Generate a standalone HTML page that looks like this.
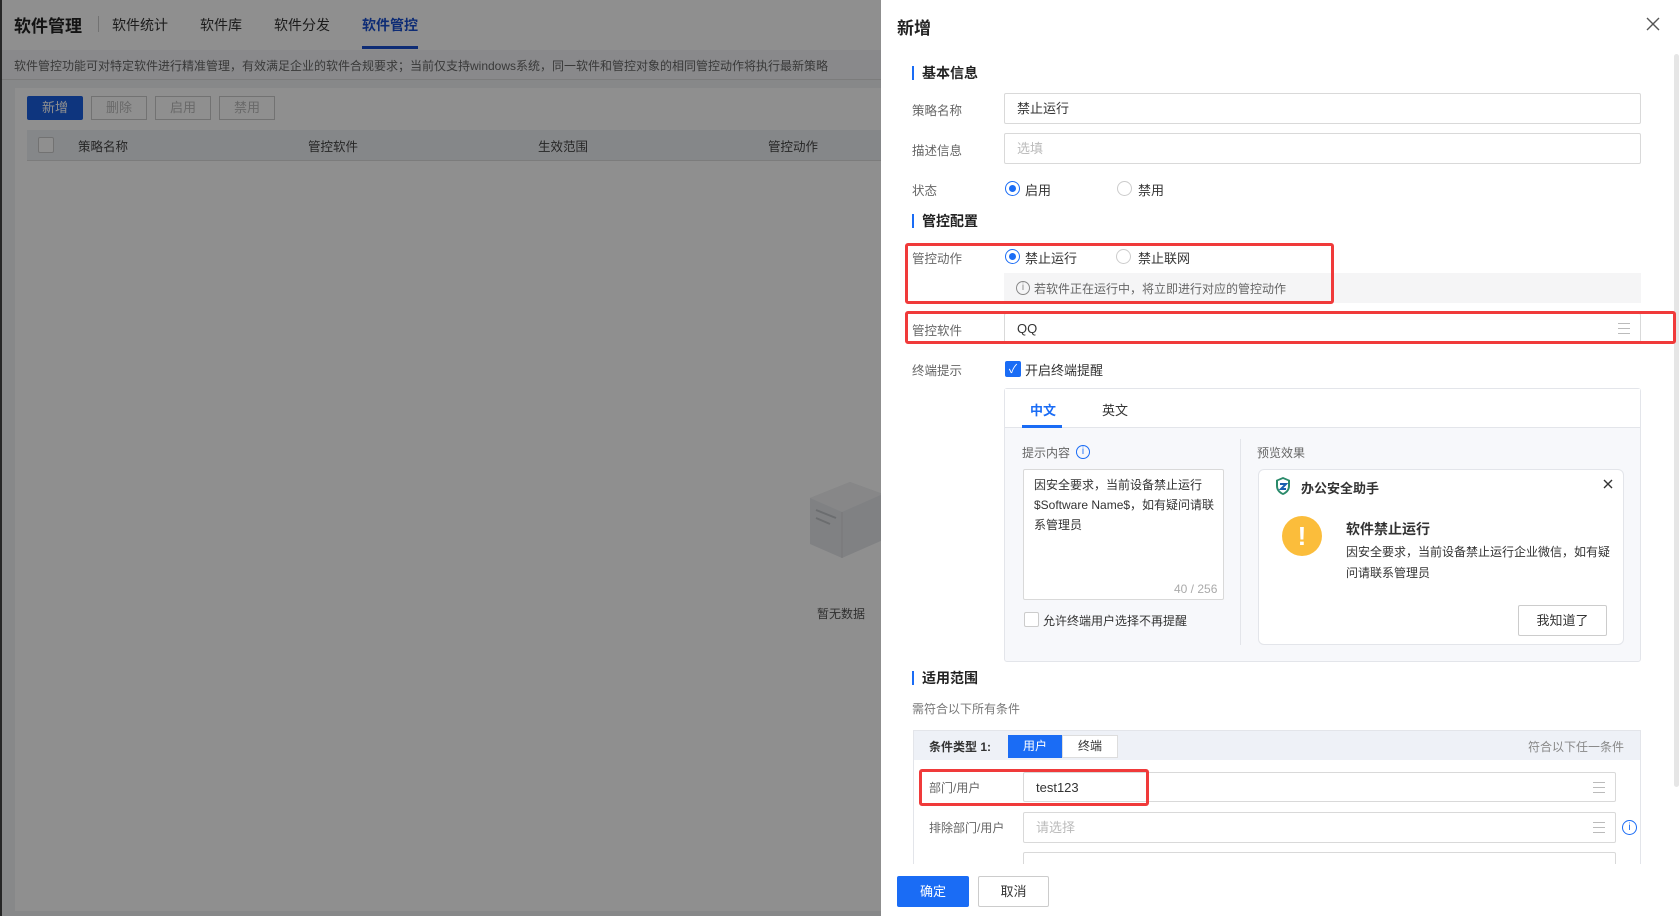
<!DOCTYPE html>
<html><head><meta charset="utf-8"><style>
*{box-sizing:border-box;margin:0;padding:0}
body{width:1679px;height:916px;overflow:hidden;position:relative;font-family:"Liberation Sans","Noto Sans CJK SC",sans-serif;font-size:13px;color:#333;background:#f0f2f5}
.abs{position:absolute}
.left{position:absolute;left:0;top:0;width:881px;height:916px;background:#f0f2f5;border-left:2px solid #444}
.ov{position:absolute;left:0;top:0;width:881px;height:916px;background:rgba(0,0,0,.44)}
.drawer{position:absolute;left:881px;top:0;width:798px;height:916px;background:#fff}
.lbl{position:absolute;left:31px;color:#666;font-size:12.5px}
.inp{position:absolute;left:123px;width:637px;height:31px;border:1px solid #d9d9d9;border-radius:2px;padding-left:12px;line-height:29px;font-size:13px;color:#333}
.sec{position:absolute;left:31px;font-size:14px;font-weight:bold;color:#222;padding-left:8px;border-left:2px solid #1a6cf5;line-height:14px}
.radio{position:absolute;width:15px;height:15px;border:1px solid #ccc;border-radius:50%;background:#fff}
.radio.on{border-color:#1a6cf5}
.radio.on:after{content:"";position:absolute;left:3px;top:3px;width:7px;height:7px;border-radius:50%;background:#1a6cf5}
.red{position:absolute;border:3px solid #f03a3a;border-radius:3px}
.menu{position:absolute;right:10px;top:9px;width:12px;height:11px;border-top:1px solid #bbb;border-bottom:1px solid #bbb}
.menu:after{content:"";position:absolute;left:0;right:0;top:4px;border-top:1px solid #bbb}
</style></head><body>
<div class="left">
 <div class="abs" style="left:0;top:0;width:881px;height:50px;background:#fff"></div>
 <div class="abs" style="left:12px;top:12px;font-size:17px;font-weight:bold;color:#222">软件管理</div>
 <div class="abs" style="left:96px;top:16px;height:16px;border-left:1px solid #ccc"></div>
 <div class="abs" style="left:110px;top:15px;font-size:14px">软件统计</div>
 <div class="abs" style="left:198px;top:15px;font-size:14px">软件库</div>
 <div class="abs" style="left:272px;top:15px;font-size:14px">软件分发</div>
 <div class="abs" style="left:360px;top:15px;font-size:14px;color:#1a4fd0;font-weight:bold">软件管控</div>
 <div class="abs" style="left:360px;top:46px;width:56px;height:3px;background:#1a4fd0"></div>
 <div class="abs" style="left:0;top:50px;width:881px;height:30px;background:#f4f5f8;border-bottom:1px solid #ddd"></div>
 <div class="abs" style="left:12px;top:57px;font-size:12px;color:#666">软件管控功能可对特定软件进行精准管理，有效满足企业的软件合规要求；当前仅支持windows系统，同一软件和管控对象的相同管控动作将执行最新策略</div>
 <div class="abs" style="left:13px;top:88px;width:868px;height:823px;background:#fff"></div>
 <div class="abs" style="left:25px;top:96px;width:56px;height:24px;background:#1a5fe0;color:#fff;text-align:center;line-height:24px;border-radius:2px">新增</div>
 <div class="abs" style="left:89px;top:96px;width:56px;height:24px;border:1px solid #ccc;color:#bbb;text-align:center;line-height:22px">删除</div>
 <div class="abs" style="left:153px;top:96px;width:56px;height:24px;border:1px solid #ccc;color:#bbb;text-align:center;line-height:22px">启用</div>
 <div class="abs" style="left:217px;top:96px;width:56px;height:24px;border:1px solid #ccc;color:#bbb;text-align:center;line-height:22px">禁用</div>
 <div class="abs" style="left:25px;top:130px;width:856px;height:31px;background:#eef0f4;border-bottom:1px solid #ddd"></div>
 <div class="abs" style="left:36px;top:137px;width:16px;height:16px;border:1px solid #ccc;background:#fff;border-radius:2px"></div>
 <div class="abs" style="left:76px;top:136px;color:#444;font-size:12.5px">策略名称</div>
 <div class="abs" style="left:306px;top:136px;color:#444;font-size:12.5px">管控软件</div>
 <div class="abs" style="left:536px;top:136px;color:#444;font-size:12.5px">生效范围</div>
 <div class="abs" style="left:766px;top:136px;color:#444;font-size:12.5px">管控动作</div>
 <svg class="abs" style="left:800px;top:470px" width="81" height="95" viewBox="0 0 81 95"><path d="M8 28L48 12L81 24V70L40 88L8 74Z" fill="#e4e6ea"/><path d="M8 28L48 12L81 24L40 42Z" fill="#f0f1f3"/><path d="M40 42V88" stroke="#d4d6da"/><path d="M14 40L34 48M14 48L28 54" stroke="#bfc2c7" stroke-width="2"/></svg>
 <div class="abs" style="left:815px;top:605px;font-size:12px;color:#555">暂无数据</div>
</div>
<div class="ov"></div>
<div class="drawer">
 <div class="abs" style="left:16px;top:14px;font-size:17px;font-weight:bold;color:#222">新增</div>
 <svg class="abs" style="left:765px;top:17px" width="14" height="14" viewBox="0 0 14 14"><path d="M1 1L13 13M13 1L1 13" stroke="#555" stroke-width="1.4"/></svg>
 <div class="abs" style="left:793px;top:54px;width:5px;height:733px;background:#e6e6e6;border-radius:3px"></div>

 <div class="sec" style="top:66px">基本信息</div>
 <div class="lbl" style="top:100px">策略名称</div>
 <div class="inp" style="top:93px">禁止运行</div>
 <div class="lbl" style="top:140px">描述信息</div>
 <div class="inp" style="top:133px;color:#bbb">选填</div>
 <div class="lbl" style="top:180px">状态</div>
 <div class="radio on" style="left:124px;top:181px"></div><div class="abs" style="left:144px;top:180px">启用</div>
 <div class="radio" style="left:236px;top:181px"></div><div class="abs" style="left:257px;top:180px">禁用</div>

 <div class="sec" style="top:214px">管控配置</div>
 <div class="lbl" style="top:248px">管控动作</div>
 <div class="radio on" style="left:124px;top:249px"></div><div class="abs" style="left:144px;top:248px">禁止运行</div>
 <div class="radio" style="left:235px;top:249px"></div><div class="abs" style="left:257px;top:248px">禁止联网</div>
 <div class="abs" style="left:123px;top:273px;width:637px;height:30px;background:#f5f5f6"></div>
 <div class="abs" style="left:135px;top:281px;width:14px;height:14px;border:1px solid #888;border-radius:50%;font-size:10px;line-height:12px;text-align:center;color:#888">i</div>
 <div class="abs" style="left:153px;top:280px;font-size:12px;color:#666">若软件正在运行中，将立即进行对应的管控动作</div>
 <div class="red" style="left:24px;top:243px;width:429px;height:61px"></div>

 <div class="lbl" style="top:320px">管控软件</div>
 <div class="inp" style="top:313px">QQ<div class="menu"></div></div>
 <div class="red" style="left:24px;top:311px;width:771px;height:33px"></div>

 <div class="lbl" style="top:360px">终端提示</div>
 <div class="abs" style="left:124px;top:361px;width:16px;height:16px;background:#1a6cf5;border-radius:2px;color:#fff;font-size:12px;line-height:16px;text-align:center">✓</div>
 <div class="abs" style="left:144px;top:360px">开启终端提醒</div>

 <div class="abs" style="left:123px;top:388px;width:637px;height:274px;border:1px solid #e3e5ea;border-radius:3px;background:#f7f8fb"></div>
 <div class="abs" style="left:124px;top:389px;width:635px;height:39px;background:#fff;border-bottom:1px solid #e3e5ea"></div>
 <div class="abs" style="left:149px;top:400px;color:#1a6cf5;font-weight:bold">中文</div>
 <div class="abs" style="left:141px;top:425px;width:40px;height:3px;background:#1a6cf5"></div>
 <div class="abs" style="left:221px;top:400px">英文</div>
 <div class="abs" style="left:141px;top:444px;color:#666;font-size:12px">提示内容</div>
 <div class="abs" style="left:195px;top:445px;width:14px;height:14px;border:1px solid #1a6cf5;border-radius:50%;color:#1a6cf5;font-size:10px;line-height:12px;text-align:center">i</div>
 <div class="abs" style="left:359px;top:439px;height:206px;border-left:1px solid #e3e5ea"></div>
 <div class="abs" style="left:142px;top:469px;width:201px;height:131px;border:1px solid #d9d9d9;background:#fff;border-radius:2px"></div>
 <div class="abs" style="left:153px;top:475px;width:185px;font-size:12px;line-height:20px;color:#333">因安全要求，当前设备禁止运行$Software Name$，如有疑问请联系管理员</div>
 <div class="abs" style="left:293px;top:582px;font-size:12px;color:#aaa">40 / 256</div>
 <div class="abs" style="left:143px;top:612px;width:15px;height:15px;border:1px solid #ccc;background:#fff;border-radius:2px"></div>
 <div class="abs" style="left:162px;top:612px;font-size:12px">允许终端用户选择不再提醒</div>
 <div class="abs" style="left:376px;top:444px;color:#666;font-size:12px">预览效果</div>
 <div class="abs" style="left:377px;top:469px;width:366px;height:176px;border:1px solid #e3e5ea;border-radius:6px;background:#fff"></div>
 <svg class="abs" style="left:393px;top:476px" width="18" height="20" viewBox="0 0 18 20"><path d="M9 1L16 4V10C16 15 12 18 9 19C6 18 2 15 2 10V4Z" fill="#2a8a6a"/><path d="M9 3L14 5V10C14 14 11 16 9 17C7 16 4 14 4 10V5Z" fill="#fff"/><path d="M6 8H12L7 13H12" stroke="#1a5fb0" stroke-width="2" fill="none"/></svg>
 <div class="abs" style="left:420px;top:478px;font-size:13px;font-weight:bold;color:#333">办公安全助手</div>
 <svg class="abs" style="left:722px;top:479px" width="10" height="10" viewBox="0 0 10 10"><path d="M1 1L9 9M9 1L1 9" stroke="#333" stroke-width="1.4"/></svg>
 <div class="abs" style="left:401px;top:516px;width:40px;height:40px;border-radius:50%;background:#fbbd3b;color:#fff;font-size:26px;font-weight:bold;text-align:center;line-height:40px">!</div>
 <div class="abs" style="left:465px;top:519px;font-size:14px;font-weight:bold;color:#333">软件禁止运行</div>
 <div class="abs" style="left:465px;top:542px;width:265px;font-size:12px;line-height:21px;color:#333">因安全要求，当前设备禁止运行企业微信，如有疑问请联系管理员</div>
 <div class="abs" style="left:637px;top:605px;width:89px;height:31px;border:1px solid #ccc;border-radius:2px;text-align:center;line-height:29px;color:#333">我知道了</div>

 <div class="sec" style="top:671px">适用范围</div>
 <div class="abs" style="left:31px;top:700px;color:#777;font-size:12px">需符合以下所有条件</div>
 <div class="abs" style="left:32px;top:730px;width:728px;height:140px;border:1px solid #e3e5ea"></div>
 <div class="abs" style="left:33px;top:731px;width:726px;height:29px;background:#eef1f7"></div>
 <div class="abs" style="left:48px;top:738px;font-weight:bold;font-size:12px">条件类型 1:</div>
 <div class="abs" style="left:127px;top:735px;width:54px;height:23px;background:#1a6cf5;color:#fff;text-align:center;line-height:23px;font-size:12px">用户</div>
 <div class="abs" style="left:181px;top:735px;width:56px;height:23px;background:#fff;border:1px solid #ddd;text-align:center;line-height:21px;font-size:12px">终端</div>
 <div class="abs" style="left:647px;top:738px;color:#888;font-size:12px">符合以下任一条件</div>
 <div class="abs" style="left:48px;top:779px;color:#666;font-size:12px">部门/用户</div>
 <div class="inp" style="left:142px;top:772px;width:593px;height:30px">test123<div class="menu"></div></div>
 <div class="red" style="left:38px;top:769px;width:230px;height:37px"></div>
 <div class="abs" style="left:48px;top:819px;color:#666;font-size:12px">排除部门/用户</div>
 <div class="inp" style="left:142px;top:812px;width:593px;height:31px;color:#bbb">请选择<div class="menu"></div></div>
 <div class="abs" style="left:741px;top:820px;width:15px;height:15px;border:1px solid #1a6cf5;border-radius:50%;color:#1a6cf5;font-size:10px;line-height:13px;text-align:center">i</div>
 <div class="inp" style="left:142px;top:852px;width:593px;height:31px"></div>
 <div class="abs" style="left:0;top:864px;width:792px;height:52px;background:#fff"></div>
 <div class="abs" style="left:16px;top:876px;width:72px;height:31px;background:#1a6cf5;color:#fff;text-align:center;line-height:31px;border-radius:2px">确定</div>
 <div class="abs" style="left:97px;top:876px;width:71px;height:31px;border:1px solid #ccc;text-align:center;line-height:29px;border-radius:2px">取消</div>
</div>
</body></html>
